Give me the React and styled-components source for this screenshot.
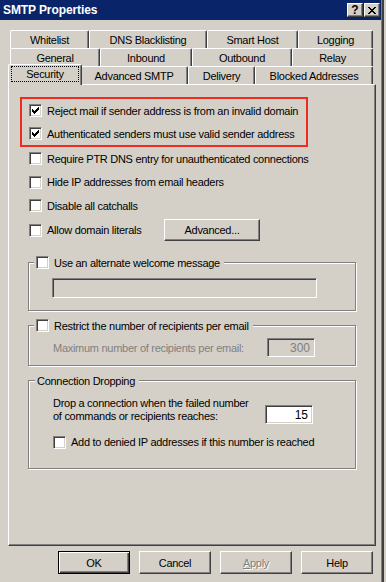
import React from "react";
import styled, { createGlobalStyle, css } from "styled-components";

const GlobalStyle = createGlobalStyle`
  html, body { margin: 0; padding: 0; background: #d4d0c8; }
  body { font-family: "Liberation Sans", Arial, sans-serif; font-size: 11px; letter-spacing: -0.28px; color: #000; }
  * { box-sizing: border-box; }
`;

const Window = styled.div`
  width: 384px;
  height: 582px;
  background: #d4d0c8;
  display: flex;
  flex-direction: column;
  border-right: 2px solid #404040;
  box-shadow: inset -1px 0 0 #808080;
`;

const TitleBar = styled.div`
  height: 20px;
  background: #0a246a;
  display: flex;
  align-items: center;
  padding: 0 1px 0 3px;
  margin-right: 1px;
`;

const Title = styled.div`
  flex: 1;
  color: #fff;
  font-weight: bold;
  font-size: 12px;
  letter-spacing: -0.1px;
`;

const CaptionButton = styled.div`
  width: 16px;
  height: 14px;
  margin-left: ${(p) => p.$gap || 0}px;
  background: #d4d0c8;
  border: 1px solid;
  border-color: #fff #404040 #404040 #fff;
  box-shadow: inset -1px -1px 0 #808080;
  display: flex;
  align-items: center;
  justify-content: center;
  font-weight: bold;
  font-size: 12px;
  line-height: 12px;
  letter-spacing: 0;
  color: #000;
`;

const Body = styled.div`
  padding: 10px 0 0 8px;
  display: flex;
  flex-direction: column;
`;

const TabStrip = styled.div`
  width: 368px;
  display: flex;
  flex-direction: column;
  position: relative;
  z-index: 2;
`;

const TabRow = styled.div`
  height: 18px;
  display: flex;
  align-items: flex-end;
  padding-left: 2px;
`;

const Tab = styled.div`
  width: ${(p) => p.$w}px;
  height: 18px;
  flex: none;
  display: flex;
  align-items: center;
  justify-content: center;
  border-top: 1px solid #fff;
  border-left: 1px solid #fff;
  border-right: 1px solid #404040;
  border-radius: 2px 2px 0 0;
  box-shadow: inset -1px 0 0 #808080;
  background: #d4d0c8;
  padding-top: 1px;
  white-space: nowrap;
  ${(p) =>
    p.$selected &&
    css`
      width: ${p.$w + 4}px;
      height: 21px;
      margin: 0 -2px -1px -2px;
      position: relative;
      z-index: 3;
      padding-top: 0;
      padding-bottom: 3px;
    `}
`;

const FocusRing = styled.span`
  outline: 1px dotted #000;
  outline-offset: 0;
  padding: 1px 4px 1px 4px;
  width: 66px;
  text-align: center;
`;

const Panel = styled.div`
  width: 368px;
  height: 462px;
  border-top: 1px solid #fff;
  border-left: 1px solid #fff;
  border-right: 1px solid #404040;
  border-bottom: 1px solid #404040;
  box-shadow: inset -1px -1px 0 #808080;
  padding: 12px 0 0 11px;
  display: flex;
  flex-direction: column;
  align-items: flex-start;
`;

const Highlight = styled.div`
  width: 288px;
  border: 2px solid #ec2b22;
  padding-left: 7px;
  display: flex;
  flex-direction: column;
`;

const CheckRow = styled.div`
  height: ${(p) => p.$h || 23}px;
  margin-left: ${(p) => p.$indent || 0}px;
  margin-top: ${(p) => p.$mt || 0}px;
  display: flex;
  align-items: center;
  white-space: nowrap;
`;

const Box = styled.span`
  width: 13px;
  height: 13px;
  flex: none;
  background: #fff;
  border: 1px solid;
  border-color: #808080 #fff #fff #808080;
  box-shadow: inset 1px 1px 0 #404040, inset -1px -1px 0 #d4d0c8;
  display: flex;
  align-items: center;
  justify-content: center;
  margin-right: 5px;
`;

const CheckText = styled.span`
  display: inline-block;
  width: ${(p) => (p.$w ? `${p.$w}px` : "auto")};
  color: ${(p) => (p.$disabled ? "#808080" : "#000")};
`;

const PushButton = styled.div`
  width: ${(p) => p.$w}px;
  height: ${(p) => p.$h || 23}px;
  flex: none;
  display: flex;
  align-items: center;
  justify-content: center;
  background: #d4d0c8;
  border: 1px solid;
  border-color: #fff #404040 #404040 #fff;
  box-shadow: inset -1px -1px 0 #808080;
  color: ${(p) => (p.$disabled ? "#808080" : "#000")};
  text-shadow: ${(p) => (p.$disabled ? "1px 1px 0 #fff" : "none")};
  ${(p) =>
    p.$default &&
    css`
      border: 1px solid #000;
      box-shadow: inset 1px 1px 0 #fff, inset -1px -1px 0 #404040, inset -2px -2px 0 #808080;
    `}
`;

const Underline = styled.span`
  text-decoration: underline;
`;

const Group = styled.div`
  width: 328px;
  margin-left: 8px;
  margin-top: ${(p) => p.$mt}px;
  padding-bottom: ${(p) => p.$pb}px;
  border: 1px solid #808080;
  box-shadow: inset 1px 1px 0 #fff, 1px 1px 0 #fff;
  display: flex;
  flex-direction: column;
  align-items: flex-start;
`;

const GroupHeader = styled.div`
  height: 15px;
  margin-top: -8px;
  margin-left: ${(p) => p.$ml}px;
  padding: 0 4px 0 2px;
  background: #d4d0c8;
  display: flex;
  align-items: center;
  white-space: nowrap;
`;

const TextField = styled.div`
  width: ${(p) => p.$w}px;
  height: ${(p) => p.$h}px;
  flex: none;
  border: 1px solid;
  border-color: #808080 #fff #fff #808080;
  box-shadow: inset 1px 1px 0 #404040, inset -1px -1px 0 #d4d0c8;
  background: ${(p) => (p.$disabled ? "#d4d0c8" : "#fff")};
  color: ${(p) => (p.$disabled ? "#808080" : "#000")};
  display: flex;
  align-items: center;
  justify-content: flex-end;
  padding-right: 4px;
  font-size: 12px;
  letter-spacing: 0;
`;

const FieldRow = styled.div`
  width: ${(p) => p.$w}px;
  margin-left: 24px;
  margin-top: ${(p) => p.$mt}px;
  display: flex;
  align-items: ${(p) => p.$align || "center"};
  justify-content: space-between;
`;

const Lines = styled.div`
  line-height: 13px;
  padding-bottom: 1px;
`;

const ButtonBar = styled.div`
  display: flex;
  gap: 9px;
  margin: 5px 0 0 50px;
`;

const CheckGlyph = () => (
  <svg width="7" height="7" viewBox="0 0 7 7" shapeRendering="crispEdges">
    <path
      fill="#000"
      d="M6 0h1v1H6z M5 1h2v1H5z M0 2h1v1H0z M4 2h3v1H4z M0 3h2v1H0z M3 3h3v1H3z M0 4h5v1H0z M1 5h3v1H1z M2 6h1v1H2z"
    />
  </svg>
);

const CloseGlyph = () => (
  <svg width="8" height="7" viewBox="0 0 8 7" shapeRendering="crispEdges">
    <path
      fill="#000"
      d="M0 0h2v1H0z M6 0h2v1H6z M1 1h2v1H1z M5 1h2v1H5z M2 2h4v1H2z M3 3h2v1H3z M2 4h4v1H2z M1 5h2v1H1z M5 5h2v1H5z M0 6h2v1H0z M6 6h2v1H6z"
    />
  </svg>
);

const Check = ({ checked }) => <Box>{checked && <CheckGlyph />}</Box>;

const rows = [
  [
    ["Whitelist", 79],
    ["DNS Blacklisting", 118],
    ["Smart Host", 91],
    ["Logging", 75],
  ],
  [
    ["General", 90],
    ["Inbound", 92],
    ["Outbound", 100],
    ["Relay", 81],
  ],
  [
    ["Security", 70, true],
    ["Advanced SMTP", 108],
    ["Delivery", 67],
    ["Blocked Addresses", 118],
  ],
];

export default function App() {
  return (
    <>
      <GlobalStyle />
      <Window>
        <TitleBar>
          <Title>SMTP Properties</Title>
          <CaptionButton>?</CaptionButton>
          <CaptionButton $gap={1}>
            <CloseGlyph />
          </CaptionButton>
        </TitleBar>
        <Body>
          <TabStrip>
            {rows.map((r, i) => (
              <TabRow key={i}>
                {r.map(([label, w, sel]) => (
                  <Tab key={label} $w={w} $selected={sel}>
                    {sel ? <FocusRing>{label}</FocusRing> : label}
                  </Tab>
                ))}
              </TabRow>
            ))}
          </TabStrip>
          <Panel>
            <Highlight>
              <CheckRow>
                <Check checked />
                <CheckText>Reject mail if sender address is from an invalid domain</CheckText>
              </CheckRow>
              <CheckRow>
                <Check checked />
                <CheckText>Authenticated senders must use valid sender address</CheckText>
              </CheckRow>
            </Highlight>
            <CheckRow $indent={9}>
              <Check />
              <CheckText>Require PTR DNS entry for unauthenticated connections</CheckText>
            </CheckRow>
            <CheckRow $indent={9} $h={24}>
              <Check />
              <CheckText>Hide IP addresses from email headers</CheckText>
            </CheckRow>
            <CheckRow $indent={9}>
              <Check />
              <CheckText>Disable all catchalls</CheckText>
            </CheckRow>
            <CheckRow $indent={9} $h={26}>
              <Check />
              <CheckText $w={117}>Allow domain literals</CheckText>
              <PushButton $w={96} $h={22}>
                Advanced...
              </PushButton>
            </CheckRow>

            <Group $mt={19} $pb={12}>
              <GroupHeader $ml={5}>
                <Check />
                <CheckText>Use an alternate welcome message</CheckText>
              </GroupHeader>
              <TextField $w={265} $h={20} $disabled style={{ marginLeft: 23, marginTop: 8 }} />
            </Group>

            <Group $mt={14} $pb={8}>
              <GroupHeader $ml={5}>
                <Check />
                <CheckText>Restrict the number of recipients per email</CheckText>
              </GroupHeader>
              <FieldRow $w={262} $mt={5}>
                <CheckText $disabled>Maximum number of recipients per email:</CheckText>
                <TextField $w={48} $h={19} $disabled>
                  300
                </TextField>
              </FieldRow>
            </Group>

            <Group $mt={14} $pb={16}>
              <GroupHeader $ml={6}>Connection Dropping</GroupHeader>
              <FieldRow $w={260} $mt={9} $align="flex-end">
                <Lines>
                  Drop a connection when the failed number
                  <br />
                  of commands or recipients reaches:
                </Lines>
                <TextField $w={48} $h={19}>
                  15
                </TextField>
              </FieldRow>
              <CheckRow $indent={24} $h={20} $mt={8}>
                <Check />
                <CheckText>Add to denied IP addresses if this number is reached</CheckText>
              </CheckRow>
            </Group>
          </Panel>
          <ButtonBar>
            <PushButton $w={72} $default>
              OK
            </PushButton>
            <PushButton $w={72}>Cancel</PushButton>
            <PushButton $w={72} $disabled>
              <span>
                <Underline>A</Underline>pply
              </span>
            </PushButton>
            <PushButton $w={72}>Help</PushButton>
          </ButtonBar>
        </Body>
      </Window>
    </>
  );
}
